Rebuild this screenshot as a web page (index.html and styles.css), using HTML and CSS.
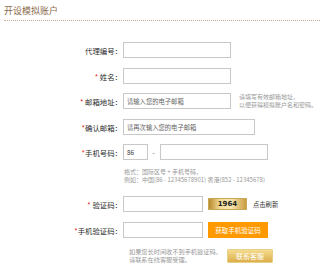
FILE: index.html
```html
<!DOCTYPE html>
<html lang="zh-CN">
<head>
  <meta charset="UTF-8" />
  <title>开设模拟账户</title>
  <link rel="stylesheet" href="styles.css">
</head>
<body>

<div class="title">开设模拟账户</div>

<div class="form">
  <div class="row r1">
    <div class="label">代理编号：</div>
    <input type="text" class="inp">
  </div>

  <div class="row r2">
    <div class="label"><span class="req">*</span> 姓名：</div>
    <input type="text" class="inp">
  </div>

  <div class="row r3">
    <div class="label"><span class="req">*</span> 邮箱地址：</div>
    <input type="text" class="inp" placeholder="请输入您的电子邮箱">
    <div class="hint">请填写有效邮箱地址，<br>以便获得模拟账户名和密码。</div>
  </div>

  <div class="row r4">
    <div class="label"><span class="req">*</span>确认邮箱：</div>
    <input type="text" class="inp wide" placeholder="请再次输入您的电子邮箱">
  </div>

  <div class="row r5">
    <div class="label"><span class="req">*</span>手机号码：</div>
    <input type="text" class="inp code" value="86">
    <span class="dash">-</span>
    <input type="text" class="inp phone">
  </div>

  <div class="note">
    格式：国际区号 + 手机号码，<br>
    例如：中国(86 - 12345678901) 香港(852 - 12345678)
  </div>

  <div class="row r6">
    <div class="label"><span class="req">*</span> 验证码：</div>
    <input type="text" class="inp short">
    <div class="captcha">1964</div>
    <span class="refresh">点击刷新</span>
  </div>

  <div class="row r7">
    <div class="label"><span class="req">*</span>手机验证码：</div>
    <input type="text" class="inp short">
    <button class="sms-btn">获取手机验证码</button>
  </div>

  <div class="bottom">
    <div class="help">如果您长时间收不到手机验证码，<br>请联系在线客服受理。</div>
    <button class="service-btn">联系客服</button>
  </div>
</div>

</body>
</html>
```

FILE: styles.css
```css
body {
  margin: 0;
  font-family: "Noto Sans CJK SC", "DejaVu Sans", sans-serif;
  background: #fff;
  color: #333;
}

.title {
  margin: 0 4px;
  padding-top: 5px;
  height: 15px;
  font-size: 9px;
  line-height: 11px;
  color: #8a6a4c;
  border-bottom: 1px dotted #c4ab93;
}

.form {
  padding-top: 21px;
}

.row {
  display: flex;
  align-items: center;
  height: 16px;
}

.r2 { margin-top: 10px; }
.r3 { margin-top: 9px; }
.r4 { margin-top: 10px; }
.r5 { margin-top: 9px; }
.r6 { margin-top: 12px; }
.r7 { margin-top: 10px; }

.label {
  width: 122px;
  text-align: right;
  font-size: 7.4px;
  color: #2a2a2a;
  white-space: nowrap;
}

.req {
  color: #e51c1c;
}

.inp {
  box-sizing: border-box;
  height: 16px;
  width: 108px;
  margin: 0 0 0 1px;
  padding: 0 3px;
  border: 1px solid #c8c8c8;
  font-family: inherit;
  font-size: 6.3px;
  color: #333;
  outline: none;
}

.inp::placeholder {
  color: #666;
}

.wide { width: 132px; }
.code { width: 25px; }
.short { width: 80px; }
.phone { width: 108px; }

.dash {
  width: 11px;
  text-align: center;
  font-size: 7px;
  color: #666;
}

.hint {
  margin-left: 8px;
  font-size: 6px;
  line-height: 8px;
  color: #999;
}

.note {
  margin: 8px 0 0 124px;
  font-size: 6px;
  line-height: 8px;
  color: #999;
}

.captcha {
  width: 39px;
  height: 12px;
  margin-left: 5px;
  box-sizing: border-box;
  border: 1px solid #c9a85a;
  background: linear-gradient(to right, #b88a2c, #f3dc98 30%, #f6e6b0 60%, #c99c40);
  font-family: "DejaVu Sans", sans-serif;
  font-weight: bold;
  font-size: 7px;
  line-height: 10px;
  text-align: center;
  color: #222;
}

.refresh {
  margin-left: 6px;
  font-size: 6.3px;
  color: #333;
}

.sms-btn {
  width: 60px;
  height: 16px;
  margin-left: 5px;
  padding: 0;
  border: none;
  background: #ff9900;
  color: #fff;
  font-family: inherit;
  font-size: 6.5px;
}

.bottom {
  display: flex;
  align-items: center;
  margin: 10px 0 0 129px;
}

.help {
  width: 98px;
  font-size: 6.2px;
  line-height: 8px;
  color: #999;
}

.service-btn {
  width: 46px;
  height: 14px;
  padding: 0;
  border: 1px solid #e8cf8a;
  border-radius: 1px;
  background: linear-gradient(to bottom, #f5dc8e, #dcae4a);
  color: #fff;
  font-family: inherit;
  font-size: 7px;
}
```
